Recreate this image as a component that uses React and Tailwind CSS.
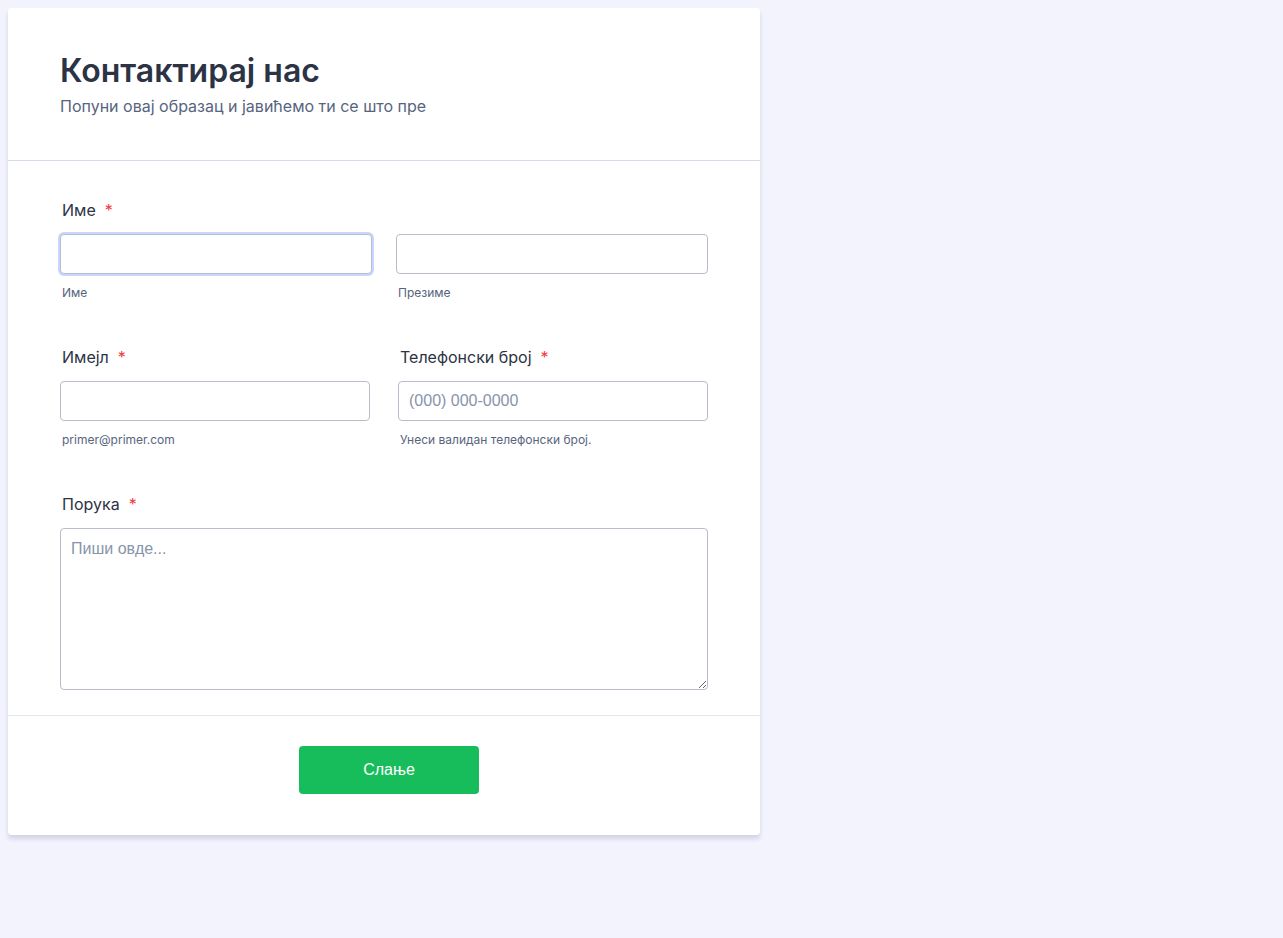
import React from "react";

const Label = ({ children }) => (
  <label className="flex items-center h-6 pl-[2px] text-[16px] text-[#2c3345]">
    {children}
    <span className="ml-[9px] text-[#f23a3c]">*</span>
  </label>
);

const SubLabel = ({ children }) => (
  <div className="mt-[11px] pl-[2px] h-4 text-[12px] leading-4 text-[#57647e]">{children}</div>
);

const inputCls =
  "block w-full h-10 rounded border border-[#b8bdc9] bg-white px-[10px] text-[16px] text-[#2c3345] outline-none placeholder:text-[#8894ab] font-['Liberation_Sans',Arial,sans-serif]";

export default function App() {
  return (
    <div className="min-h-screen bg-[#f3f3fe] p-2 font-['Inter',sans-serif]">
      <div className="w-[752px] bg-white rounded shadow-[0_4px_4px_rgba(87,100,126,0.21)]">
        {/* header */}
        <div className="px-[52px] pt-[44px] pb-[42px] border-b border-[#d8dae9]">
          <h1 className="text-[32px] leading-[38px] font-semibold text-[#2c3345]">Контактирај нас</h1>
          <p className="mt-[4px] text-[16px] leading-6 text-[#57647e]">
            Попуни овај образац и јавићемо ти се што пре
          </p>
        </div>

        {/* body */}
        <div className="px-[52px] pt-[37px] pb-[25px] border-b border-[#e3e5f0]">
          <Label>Име</Label>
          <div className="mt-3 grid grid-cols-2 gap-6">
            <div>
              <input className={inputCls + " border-[#85a0f6] shadow-[0_0_0_2px_#c9d6fd]"} />
              <SubLabel>Име</SubLabel>
            </div>
            <div>
              <input className={inputCls} />
              <SubLabel>Презиме</SubLabel>
            </div>
          </div>

          <div className="mt-11 grid grid-cols-2 gap-7">
            <div>
              <Label>Имејл</Label>
              <input className={inputCls + " mt-3"} />
              <SubLabel>primer@primer.com</SubLabel>
            </div>
            <div>
              <Label>Телефонски број</Label>
              <input className={inputCls + " mt-3"} placeholder="(000) 000-0000" />
              <SubLabel>Унеси валидан телефонски број.</SubLabel>
            </div>
          </div>

          <div className="mt-11">
            <Label>Порука</Label>
            <textarea
              className="mt-3 block w-full h-[162px] rounded border border-[#b8bdc9] bg-white px-[10px] py-[8px] text-[16px] text-[#2c3345] outline-none placeholder:text-[#8894ab] font-['Liberation_Sans',Arial,sans-serif]"
              placeholder="Пиши овде..."
            />
          </div>
        </div>

        {/* footer */}
        <div className="flex justify-center pl-[10px] pt-[30px] pb-[41px]">
          <button className="w-[180px] h-12 rounded bg-[#18bd5b] text-white text-[16px] font-['Liberation_Sans',Arial,sans-serif]">
            Слање
          </button>
        </div>
      </div>
    </div>
  );
}
